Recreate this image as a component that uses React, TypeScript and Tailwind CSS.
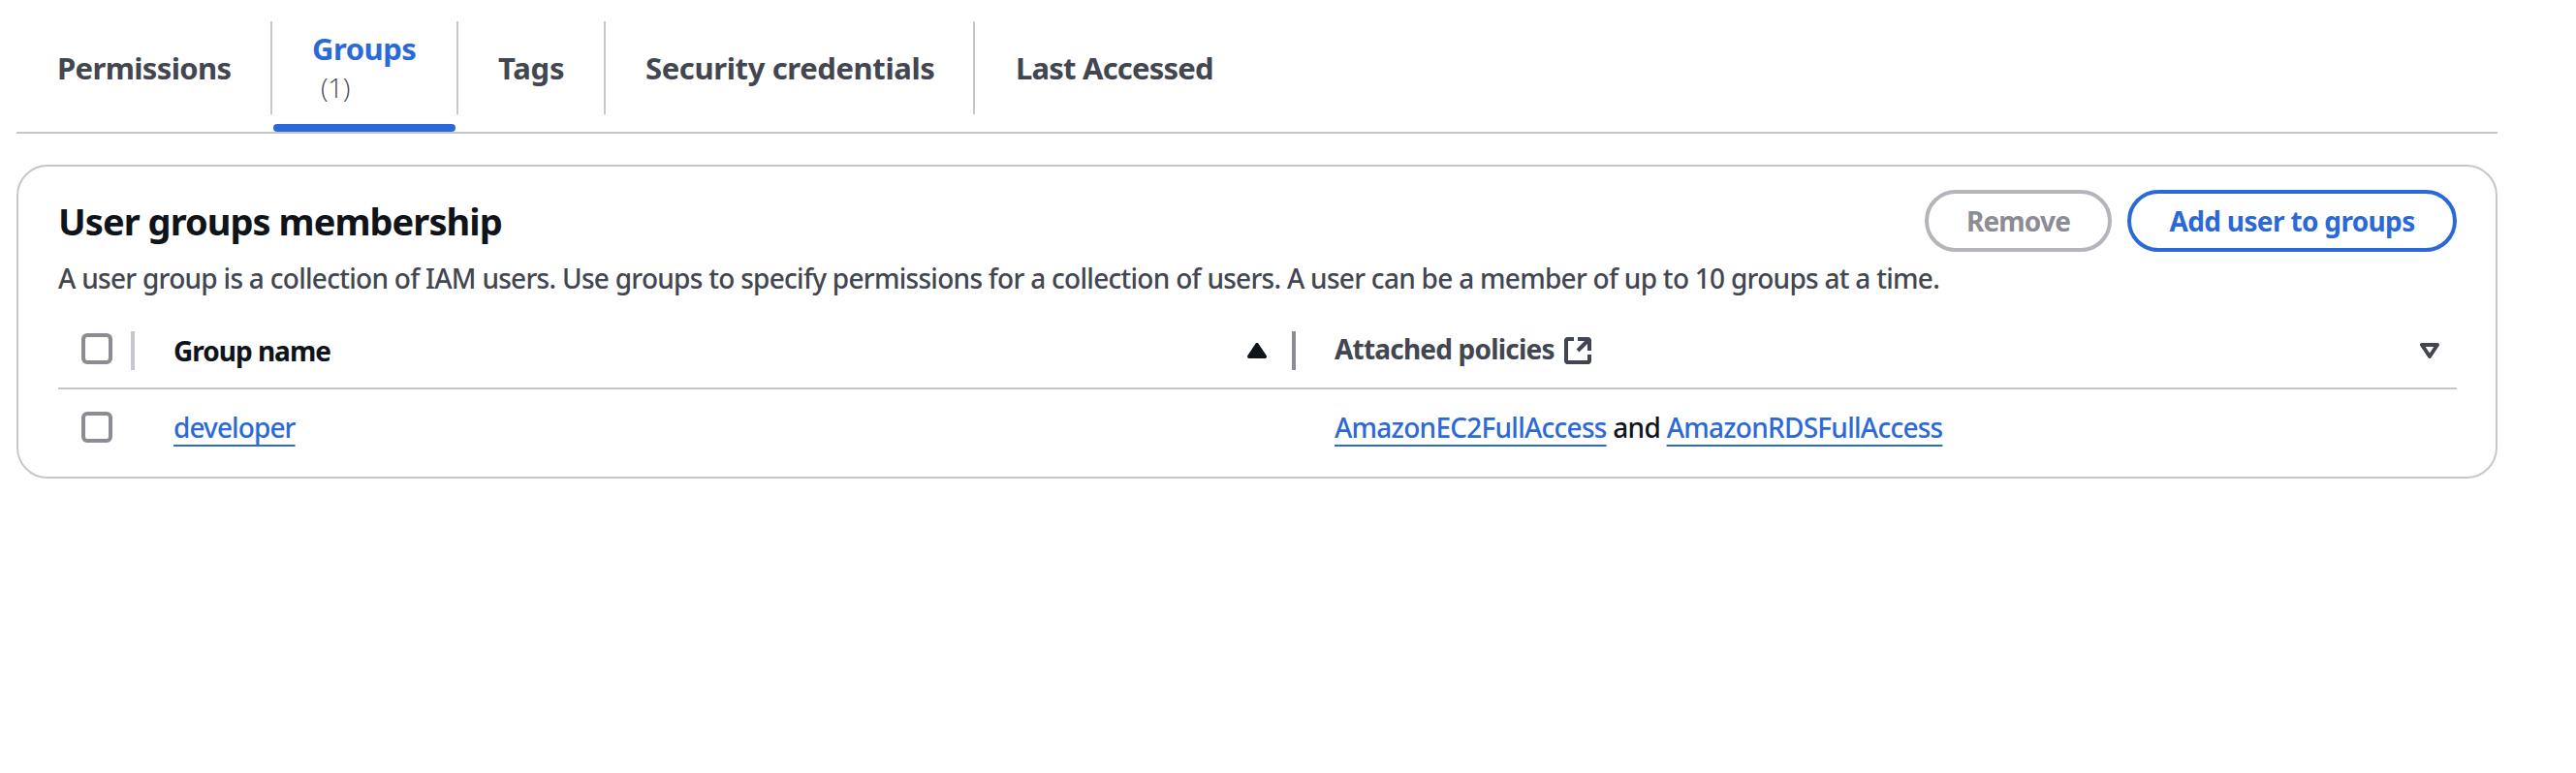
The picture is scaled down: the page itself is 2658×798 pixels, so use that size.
import type { ReactNode } from "react";

function ExternalIcon() {
  return (
    <svg width="28" height="28" viewBox="0 0 28 28" fill="none" stroke="currentColor" strokeWidth="4">
      <path d="M10 2H3L2 3v22l1 1h22l1-1v-7" strokeLinejoin="round" />
      <path d="M14 2h11l1 1v11" strokeLinejoin="round" />
      <path d="M26 2 14 14" />
    </svg>
  );
}

function SortIcon({ active = false }: { active?: boolean }) {
  return (
    <svg width="20" height="16" viewBox="0 0 20 16" stroke="currentColor" strokeWidth="4" strokeLinejoin="round">
      {active ? <path d="M2 14 10 2l8 12Z" fill="currentColor" /> : <path d="M2 2h16l-8 12Z" fill="none" />}
    </svg>
  );
}

function Checkbox() {
  return <span className="block size-8 shrink-0 rounded-[6px] border-4 border-[#8c8c94] bg-white" />;
}

function Tab({ className, children }: { className: string; children: ReactNode }) {
  return (
    <div className={`flex h-24 shrink-0 flex-col justify-center text-[31px] leading-10 font-bold ${className}`}>
      {children}
    </div>
  );
}

function Link({ className, children }: { className: string; children: ReactNode }) {
  return (
    <a
      href="#"
      className={`text-[#2b69d9] underline decoration-2 underline-offset-[7px] [text-decoration-skip-ink:none] ${className}`}
    >
      {children}
    </a>
  );
}

export default function App() {
  return (
    <div className="min-h-[798px] bg-white pt-[22px] pr-[81px] pl-[17px] font-['Noto_Sans','Open_Sans',sans-serif] whitespace-nowrap text-[#0f141a]">
      <nav className="flex h-[116px] border-b-2 border-[#c6c6cd] text-[#424650]">
        <Tab className="w-[264px] border-r-2 border-[#c6c6cd] pl-[42px] tracking-[-0.65px]">Permissions</Tab>
        <div className="relative w-[192px]">
          <Tab className="border-r-2 border-[#c6c6cd] pl-[41px]">
            <span className="tracking-[-0.5px] text-[#2b69d9]">Groups</span>
            <span className="pl-[9px] font-['Open_Sans'] text-[28px] font-light tracking-[-0.4px] text-[#424650]">
              (1)
            </span>
          </Tab>
          <div className="absolute top-[106px] left-px h-2 w-[188px] rounded-[4px] bg-[#2b69d9]" />
        </div>
        <Tab className="w-[152px] border-r-2 border-[#c6c6cd] pl-[41px] tracking-[-0.2px]">Tags</Tab>
        <Tab className="w-[381px] border-r-2 border-[#c6c6cd] pl-[41px] tracking-[-0.38px]">Security credentials</Tab>
        <Tab className="pl-[42px] tracking-[-0.8px]">Last Accessed</Tab>
      </nav>

      <section className="mt-8 h-[324px] rounded-[32px] border-2 border-[#c6c6cd] pt-6 pr-10 pl-[41px]">
        <header className="flex h-16 items-center">
          <h2 className="text-[38px] leading-[48px] font-bold tracking-[-0.95px]">User groups membership</h2>
          <div className="ml-auto flex gap-4 text-[28px] font-bold">
            <button className="h-16 w-[193px] rounded-full border-4 border-[#b4b4bb] leading-[54px] tracking-[-0.8px] text-[#8c8c94]">
              Remove
            </button>
            <button className="h-16 w-[340px] rounded-full border-4 border-[#2b69d9] leading-[54px] tracking-[-0.65px] text-[#2b69d9]">
              Add user to groups
            </button>
          </div>
        </header>
        <p className="mt-[7px] text-[28px] leading-10 font-medium tracking-[-0.72px] text-[#424650]">
          A user group is a collection of IAM users. Use groups to specify permissions for a collection of users. A user
          can be a member of up to 10 groups at a time.
        </p>

        <div className="flex h-[95px] border-b-2 border-[#c6c6cd] pt-[35px] text-[28px] leading-10 font-bold">
          <div className="flex h-10 w-[79px] justify-between pt-[2px] pl-6">
            <Checkbox />
            <span className="-mt-[2px] h-10 w-1 bg-[#c6c6cd]" />
          </div>
          <div className="flex h-10 w-[1198px] items-center pl-[40px] tracking-[-1px]">
            <span>Group name</span>
            <span className="ml-auto">
              <SortIcon active />
            </span>
            <span className="ml-[26px] h-10 w-1 bg-[#8c8c94]" />
          </div>
          <div className="flex h-10 flex-1 items-center gap-2.5 pr-[18px] pl-[40px] text-[#424650]">
            <span className="-mt-1 tracking-[-0.8px]">Attached policies</span>
            <ExternalIcon />
            <span className="ml-auto">
              <SortIcon />
            </span>
          </div>
        </div>

        <div className="flex h-[78px] items-center text-[28px] leading-10 font-medium">
          <div className="w-[119px] pl-6">
            <Checkbox />
          </div>
          <div className="w-[1198px]">
            <Link className="tracking-[-0.9px]">developer</Link>
          </div>
          <div>
            <Link className="tracking-[-0.75px]">AmazonEC2FullAccess</Link>
            <span className="tracking-[-0.7px]"> and </span>
            <Link className="tracking-[-0.75px]">AmazonRDSFullAccess</Link>
          </div>
        </div>
      </section>
    </div>
  );
}
